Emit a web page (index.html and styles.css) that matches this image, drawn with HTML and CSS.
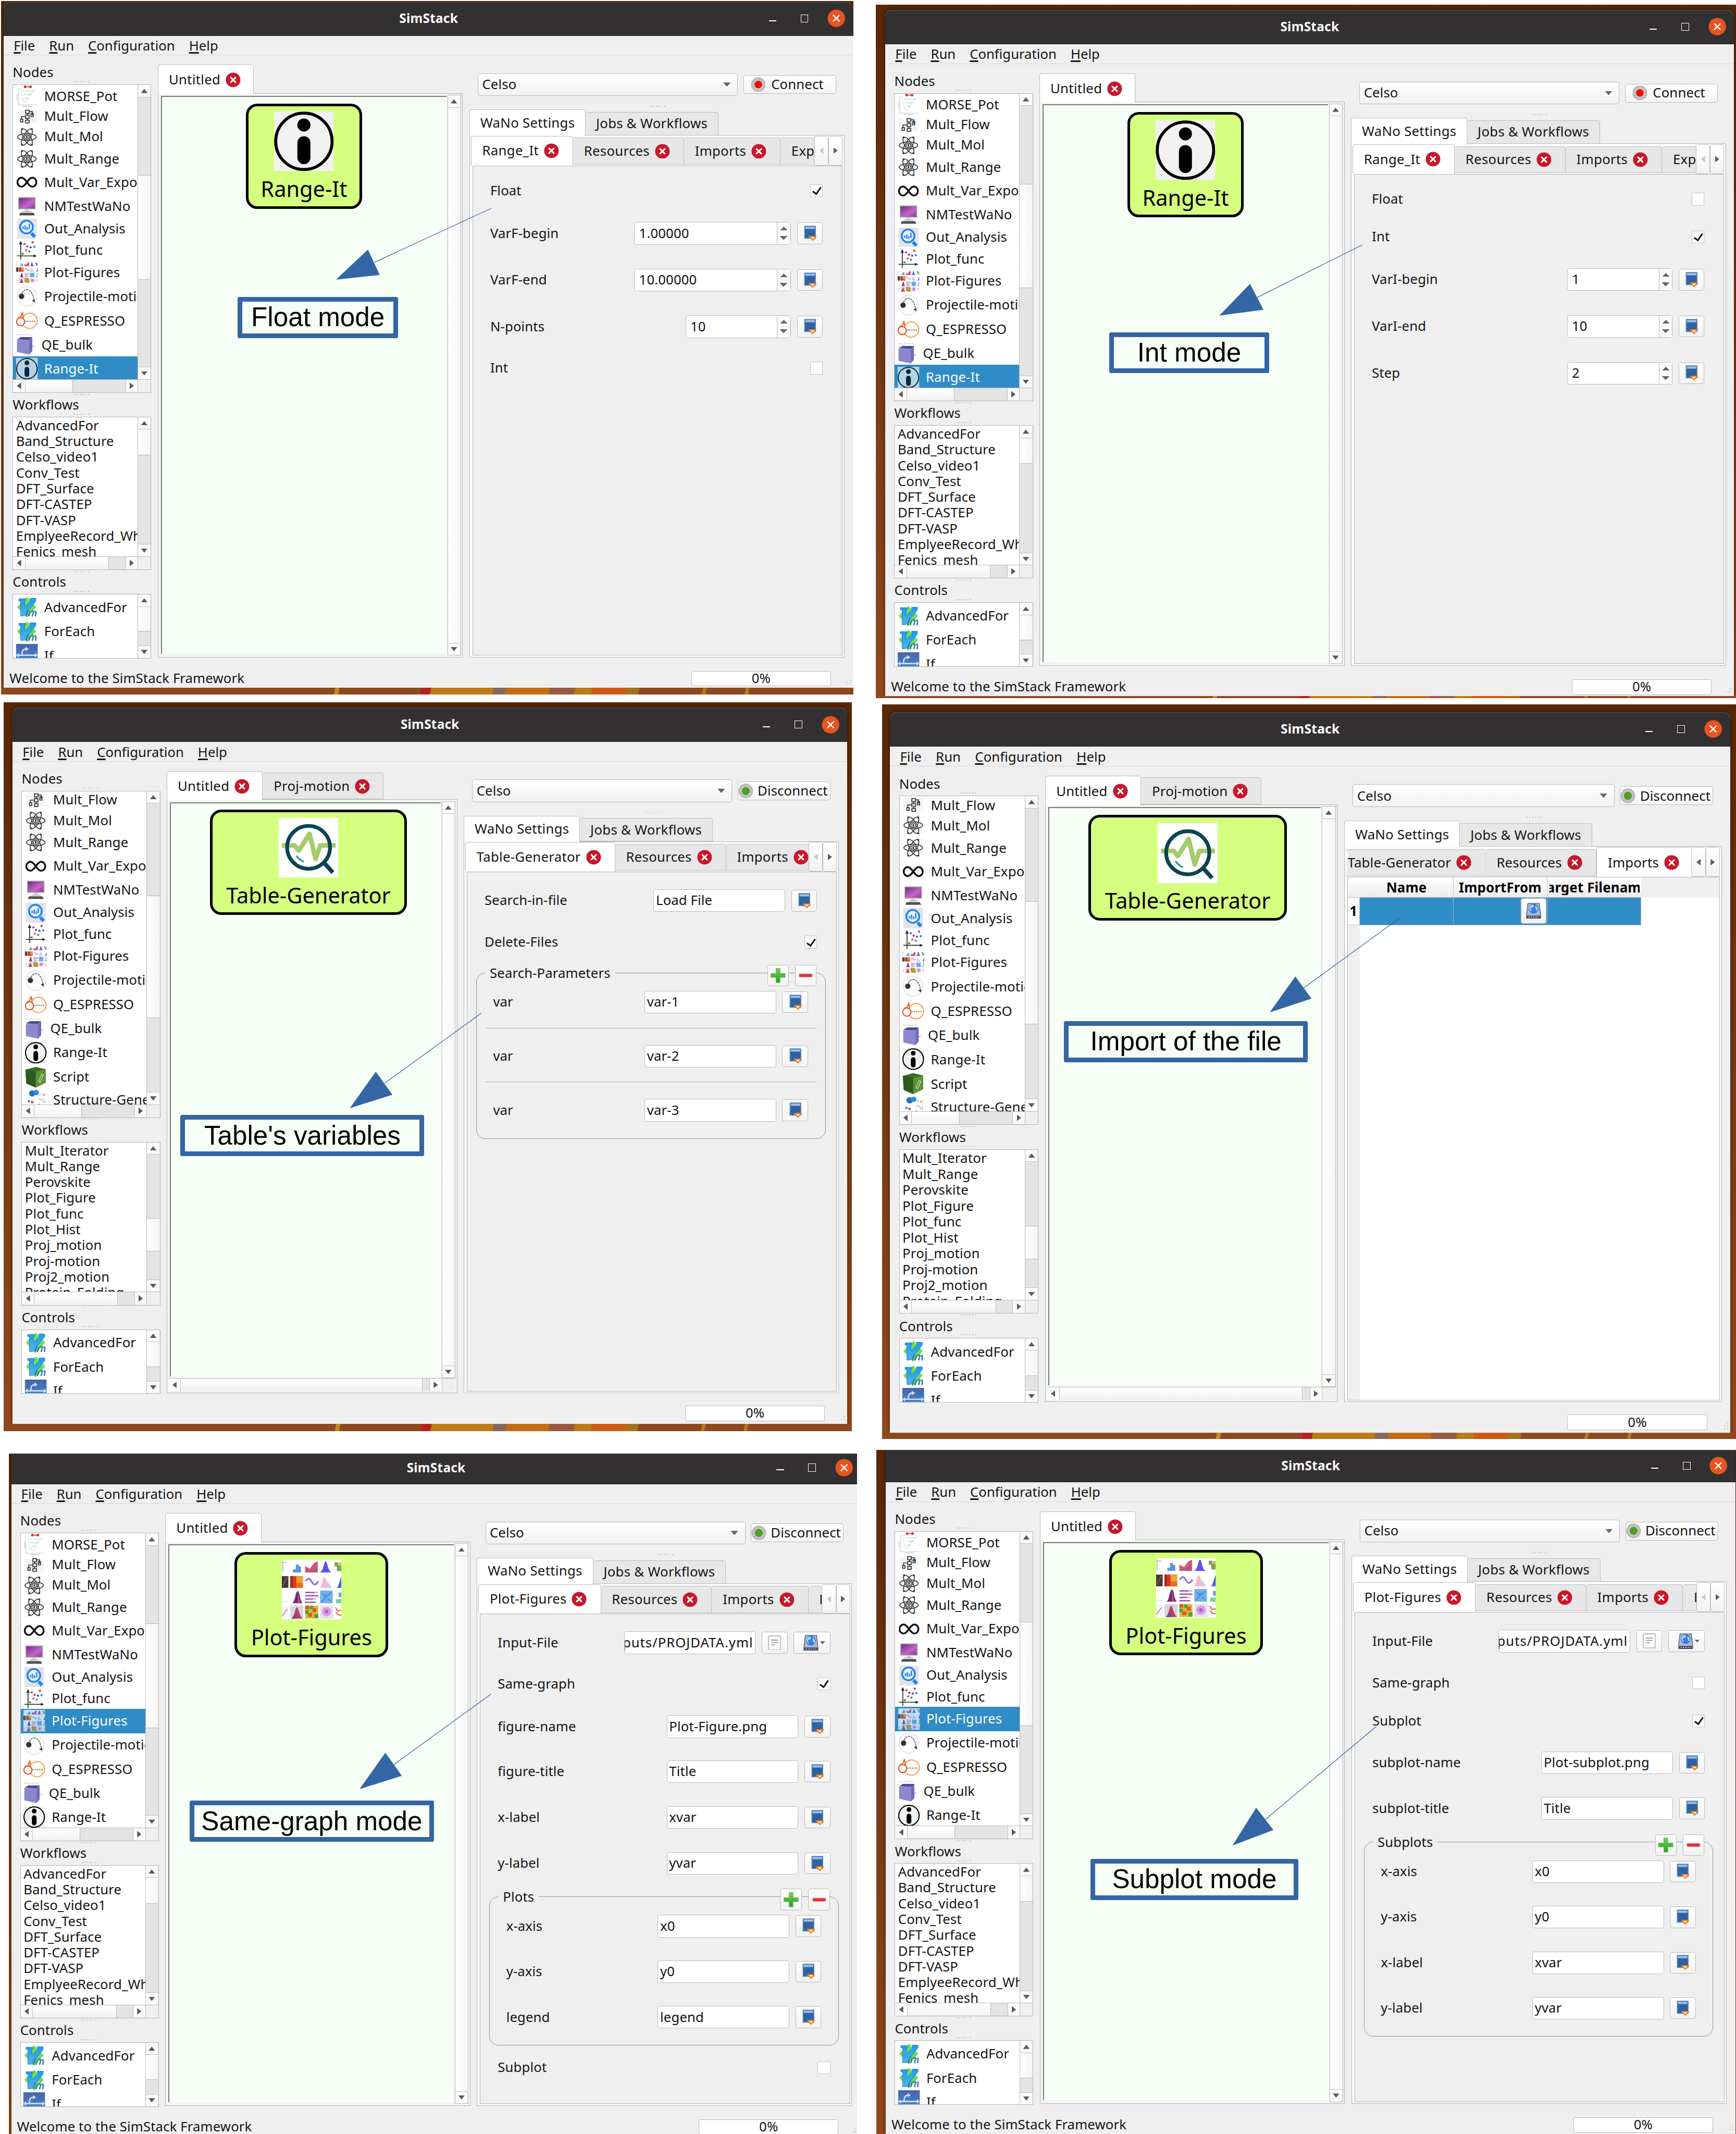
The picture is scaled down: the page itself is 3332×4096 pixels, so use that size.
FILE: index.html
```html
<!DOCTYPE html>
<html lang="en">
<head>
<meta charset="utf-8">
<title>SimStack</title>
<link rel="stylesheet" href="styles.css">
</head>
<body>
<svg class="defs" width="0" height="0" aria-hidden="true">
  <defs>
    <linearGradient id="g-mon" x1="0" y1="0" x2="1" y2="1"><stop offset="0" stop-color="#6d2a86"/><stop offset=".6" stop-color="#c565c8"/><stop offset="1" stop-color="#8c3a96"/></linearGradient>
    <linearGradient id="g-vim" x1="0" y1="0" x2="0" y2="1"><stop offset="0" stop-color="#1f9bea"/><stop offset="1" stop-color="#4fb4f0"/></linearGradient>
    <linearGradient id="g-if" x1="0" y1="0" x2="0" y2="1"><stop offset="0" stop-color="#4a62ac"/><stop offset="1" stop-color="#3c96d0"/></linearGradient>
    <linearGradient id="g-plus" x1="0" y1="0" x2="0" y2="1"><stop offset="0" stop-color="#7ad65c"/><stop offset="1" stop-color="#1f9a1f"/></linearGradient>
    <radialGradient id="g-led"><stop offset=".6" stop-color="#c9c9c9"/><stop offset="1" stop-color="#b2b2b2"/></radialGradient>
  </defs>
  <symbol id="i-close" viewBox="0 0 32 32"><circle cx="16" cy="16" r="15.5" fill="#c9162b"/><path d="M11 11l10 10M21 11L11 21" stroke="#fff" stroke-width="3.4" stroke-linecap="round"/></symbol>
  <symbol id="i-quit" viewBox="0 0 38 38"><circle cx="19" cy="19" r="18.5" fill="#e95420"/><path d="M12 12l14 14M26 12L12 26" stroke="#fff" stroke-width="2.6"/></symbol>
  <symbol id="i-morse" viewBox="0 0 48 48"><path d="M5 4v39h41" fill="none" stroke="#cfcfcf" stroke-width="1.6"/><path d="M2 18v14M14 46h20" stroke="#c9c9c9" stroke-width="1.6"/><path d="M10 6c3 14 5 32 10 31S28 14 44 9" fill="none" stroke="#b9dcf0" stroke-width="2" stroke-dasharray="3 2"/><path d="M14 12h26M17 20h18M19 28h9" stroke="#b8e6b8" stroke-width="1.6"/><path d="M19 3h13" stroke="#d23c3c" stroke-width="2"/><circle cx="20" cy="3" r="3" fill="#cf3b3b"/><circle cx="32" cy="3" r="3" fill="#cf3b3b"/></symbol>
  <symbol id="i-flow" viewBox="0 0 48 48"><path d="M2 10h44v28H2z" fill="#f4f4f4"/><path d="M21 10h8v7h-8zM21 21h8v7h-8zM21 32h8v6h-8zM25 17v4M25 28v4M21 24h-9v6M29 13h7v8M10 30h5v6h-5zM33 17h5v7h-5z" fill="none" stroke="#333" stroke-width="2"/></symbol>
  <symbol id="i-atom" viewBox="0 0 48 48"><path d="M2 2h44v44H2z" fill="#f7f7f7"/><g fill="none" stroke="#2e2e2e" stroke-width="2"><ellipse cx="24" cy="24" rx="22.500" ry="8.500"/><ellipse cx="24" cy="24" rx="22.500" ry="8.500" transform="rotate(60 24 24)"/><ellipse cx="24" cy="24" rx="22.500" ry="8.500" transform="rotate(120 24 24)"/><circle cx="24" cy="24" r="5.500"/></g><path d="M24 21v6" stroke="#111" stroke-width="3"/><g fill="#333"><circle cx="12" cy="5" r="2.400"/><circle cx="36" cy="5" r="2.400"/><circle cx="12" cy="43" r="2.400"/><circle cx="36" cy="43" r="2.400"/></g></symbol>
  <symbol id="i-inf" viewBox="0 0 48 48"><path d="M24 24C19 17 16 14 12 14a9 10 0 0 0 0 20c4 0 7-3 12-10s8-10 12-10a9 10 0 0 1 0 20c-4 0-7-3-12-10z" fill="none" stroke="#111" stroke-width="4"/></symbol>
  <symbol id="i-mon" viewBox="0 0 48 48"><path d="M3 2h42v29H3z" fill="#9d9d9d"/><path d="M5 4h38v25H5z" fill="url(#g-mon)"/><path d="M19 31h10v6H19z" fill="#d0d0d0"/><path d="M13 36h22v2H13z" fill="#aaa"/><path d="M8 40h32l3 6H5z" fill="#333"/><path d="M8 43h32" stroke="#999"/></symbol>
  <symbol id="i-out" viewBox="0 0 48 48"><path d="M0 0h48v48H0z" fill="#e3e3e6"/><path d="M35 35l8 9" stroke="#1b86f2" stroke-width="8"/><circle cx="23" cy="20" r="15.500" fill="#eef0f4" stroke="#1b86f2" stroke-width="4.500"/><path d="M15 19v6M20 16v11M25 20v7M30 12v13" stroke="#1b86f2" stroke-width="3.200"/></symbol>
  <symbol id="i-func" viewBox="0 0 48 48"><path d="M9 46V5M0 37h44" stroke="#222" stroke-width="2" fill="none"/><path d="M9 0l4 9H5zM48 37l-8-3.500v7z" fill="#222"/><g><circle cx="18" cy="8" r="2.600" fill="#8a3fc0"/><circle cx="38" cy="4" r="2.600" fill="#d33"/><circle cx="25" cy="14" r="2.600" fill="#c22"/><circle cx="33" cy="16" r="2.600" fill="#2a4fd0"/><circle cx="42" cy="15" r="2.600" fill="#3a6fe0"/><circle cx="22" cy="23" r="2.600" fill="#d040c0"/><circle cx="30" cy="26" r="2.600" fill="#2a9a2a"/><circle cx="14" cy="32" r="2.600" fill="#2a9a2a"/></g></symbol>
  <symbol id="i-fig" viewBox="0 0 128 128"><path d="M0 0h128v128H0z" fill="#fff"/>
    <path d="M0 6h12M2 2v24" stroke="#aaa" stroke-width="1.500"/><path d="M24 20h6v7h-6zM30 10h6v17h-6zM36 14h5v13h-5z" fill="#5a97d8"/>
    <path d="M50 27V14l10 5 9-12 8-4v24z" fill="#b05a86"/><path d="M50 14l10 5 9-12 8-4v9l-17 12-10-3z" fill="#e0546a"/>
    <path d="M81 27c9-3 9-24 13-24s4 21 13 24z" fill="#5a55e8"/><path d="M113 5h8v9h-8zM118 12h10v12h-10z" fill="#76a84e"/><path d="M122 6h6v6h-6z" fill="#d8c046"/>
    <path d="M0 35h14v25H0z" fill="#3a3a3a"/><path d="M2 56l9-18" stroke="#b44" stroke-width="2"/>
    <path d="M18 35h27v25H18z" fill="#d8361e"/><path d="M31 35h14v15H31z" fill="#f0a32a"/><path d="M31 50h14v10H31z" fill="#e6701e"/><path d="M18 35h5v25h-5z" fill="#b02214"/>
    <path d="M51 46c6-10 9-6 13 1s8 9 14-1" fill="none" stroke="#8c70d8" stroke-width="3.500"/>
    <path d="M81 60c6-2 6-24 10-23s7 20 17 23z" fill="#f6b9c8"/><path d="M88 60c6-4 8-12 11-12s4 10 9 12z" fill="#d9c2f4"/><path d="M117 60c6-3 7-20 11-24v24z" fill="#4f62dc"/>
    <path d="M0 90h14" stroke="#ccc"/><path d="M22 93c7-3 7-26 12-26s4 22 11 26z" fill="#6d2a80"/><path d="M34 67l5 26h-5z" fill="#d0486a"/>
    <path d="M50 70h20M50 77h28M50 84h16M50 91h23" stroke="#a05ab0" stroke-width="3"/><path d="M70 70h8M66 84h7" stroke="#f3a0b4" stroke-width="3"/>
    <path d="M82 66h27v27H82z" fill="#6db4ec"/><path d="M85 90l20-20M87 72l5 5M98 84l7 4M90 80l6-6" stroke="#4c7ad4" stroke-width="2"/><path d="M116 84h12v9h-12z" fill="#7ccf9a"/><path d="M122 70h6v10h-6z" fill="#6aa0e0"/>
    <path d="M0 99h14v27H0z" fill="#f5f5f8"/><path d="M1 120l11-15" stroke="#e07a9a" stroke-width="2"/><path d="M18 98h28v28H18z" fill="#d6d6de"/><path d="M20 126c8-4 8-24 12-24s5 18 13 24z" fill="#c2405a"/><path d="M20 126c6-2 8-12 12-12v12z" fill="#6d4a9a"/>
    <path d="M50 98h28v28H50z" fill="#d8b83c"/><path d="M50 98h8v8h-8zM66 104h8v8h-8zM56 114h9v8h-9z" fill="#d85a2a"/><path d="M60 99h7v7h-7zM50 108h7v8h-7zM70 116h8v9h-8z" fill="#4aa03a"/>
    <path d="M82 98h28v28H82z" fill="#e3e1ea"/><circle cx="96" cy="111" r="10" fill="#dc9ae6"/><circle cx="96" cy="111" r="4" fill="#b860cc"/><path d="M115 102l5 8 8-2M128 118c-5 2-10-1-12-6" fill="none" stroke="#e8694a" stroke-width="2.500"/></symbol>
  <symbol id="i-proj" viewBox="0 0 48 48"><circle cx="24" cy="24" r="22" fill="#fcfcfc" stroke="#dedede" stroke-width="1.500"/><circle cx="12" cy="24" r="6" fill="#333"/><path d="M13 18C17 8 24 8 28 10c7 3 11 14 12 23" fill="none" stroke="#666" stroke-width="2" stroke-dasharray="5 1.500"/><path d="M41 38l-6-5 7-2z" fill="#333"/></symbol>
  <symbol id="i-esp" viewBox="0 0 48 48"><circle cx="30" cy="24" r="17" fill="#fffaf2" stroke="#f3a056" stroke-width="2.400"/><circle cx="10" cy="26" r="9" fill="#fff6f2" stroke="#d64a2a" stroke-width="2.200"/><path d="M4 17l6-1 4-11 2 13" fill="none" stroke="#e8692a" stroke-width="2.600"/><path d="M20 25h23" stroke="#8a8a8a" stroke-width="2.500" stroke-dasharray="3 2"/></symbol>
  <symbol id="i-cube" viewBox="0 0 48 48"><path d="M2 12l9-5h25l-7 7z" fill="#4a48a0"/><path d="M2 13h27v33L2 40z" fill="#8a88cc"/><path d="M29 14l7-7v31l-7 8z" fill="#6f6cb8"/><path d="M2 2h32" stroke="#bbb" stroke-width="2" stroke-dasharray="3 3"/><path d="M36 27h5" stroke="#999" stroke-width="1.500"/></symbol>
  <symbol id="i-info" viewBox="0 0 128 128"><path d="M0 0h128v128H0z" fill="#f1f1f1"/><circle cx="64" cy="64" r="60.500" fill="#f1f1f1" stroke="#000" stroke-width="6.500"/><circle cx="64" cy="29" r="14"/><rect x="50" y="53" width="28" height="60" rx="14"/></symbol>
  <symbol id="i-infosel" viewBox="0 0 128 128"><path d="M0 0h128v128H0z" fill="#b3d4e8"/><circle cx="64" cy="64" r="60.500" fill="#b3d4e8" stroke="#12303f" stroke-width="6.500"/><circle cx="64" cy="29" r="14" fill="#0c2433"/><rect x="50" y="53" width="28" height="60" rx="14" fill="#0c2433"/></symbol>
  <symbol id="i-script" viewBox="0 0 48 48"><path d="M1 7l23-6 22 5v30L24 47 3 38z" fill="#3f6b25"/><path d="M1 7l23 5v35L3 38z" fill="#2f5a1c"/><path d="M24 12l22-6v30L24 47z" fill="#5c9238"/><path d="M30 33l7-16 4 2-7 16z" fill="none" stroke="#b9dc9a" stroke-width="1.800"/></symbol>
  <symbol id="i-struct" viewBox="0 0 48 48"><circle cx="16" cy="9" r="7" fill="#2273c4"/><circle cx="25" cy="7" r="6" fill="#2f8de0"/><circle cx="33" cy="11" r="3.500" fill="#cfe2f4"/><circle cx="9" cy="26" r="3" fill="#4aa6e0"/><circle cx="16" cy="28" r="3" fill="#d05a4a"/><circle cx="42" cy="12" r="2" fill="#c66"/><path d="M30 22c8-2 10 2 11 8M6 40l8-6 8 6M44 22v8" fill="none" stroke="#b9b9b9" stroke-width="2"/><circle cx="31" cy="34" r="2.500" fill="#e08a3a"/></symbol>
  <symbol id="i-vim" viewBox="0 0 48 48"><path d="M24 1l21 22-21 24L2 23z" fill="#6fdc5c"/><path d="M6 5h15v4l-2 1v13L33 9l-2-1V4h13v6L18 43h-8V10H6z" fill="url(#g-vim)" stroke="#1a78bc" stroke-width="1"/><path d="M27 29l-5 15M31 33l-3 11M33 33c6-3 6 0 3 11M40 34c5-2 5 0 3 10" fill="none" stroke="#2c7aa8" stroke-width="3"/></symbol>
  <symbol id="i-if" viewBox="0 0 48 48"><path d="M0 0h48v48H0z" fill="url(#g-if)"/><path d="M4 25h40M13 24c0-9 3-13 9-13" fill="none" stroke="#d3deee" stroke-width="3"/><path d="M21 6l7 5-7 5zM42 20l6 5-6 5zM6 20l-6 5 6 5z" fill="#d3deee"/></symbol>
  <symbol id="i-save" viewBox="0 0 28 34"><path d="M1 1h24v27H1z" fill="#3465a4"/><path d="M2.500 2.500h21v5h-21z" fill="#9dbfe6"/><path d="M4 8h18v17H4z" fill="#2f62a5"/><path d="M1 1h24v27H1z" fill="none" stroke="#5b8ac6" stroke-width="1.500"/><path d="M11 24h15l-7.500 8z" fill="#fbe3b4" stroke="#f07c12" stroke-width="2.400" stroke-linejoin="round"/></symbol>
  <symbol id="i-doc" viewBox="0 0 28 32"><rect x="1" y="1" width="26" height="30" rx="3" fill="#fafafa" stroke="#b0b0b0" stroke-width="1.800"/><path d="M7 10h14M7 15h14M7 20h7" stroke="#999" stroke-width="2"/></symbol>
  <symbol id="i-disk" viewBox="0 0 32 34"><path d="M4 1h24l3 25v7H1v-7z" fill="#aeb9cc" stroke="#4a5a78" stroke-width="1.500"/><circle cx="16" cy="12" r="10.500" fill="#3a7ce0"/><path d="M10 5c4-3 8 0 6 3s-5 1-6 4 3 3 2 6c-5-2-8-8-2-13zM20 6c4 2 6 7 4 11-3-1-5-5-4-11z" fill="#a9d2fb"/><path d="M2 27h28v6H2z" fill="#38435c"/><path d="M5 30h22" stroke="#c4cede" stroke-width="2" stroke-dasharray="3 2"/></symbol>
  <symbol id="i-plus" viewBox="0 0 34 34"><path d="M13 2h8v11h11v8H21v11h-8V21H2v-8h11z" fill="url(#g-plus)" stroke="#55b845" stroke-width="1.500" stroke-linejoin="round"/></symbol>
  <symbol id="i-minus" viewBox="0 0 34 34"><rect x="3" y="13.500" width="28" height="7" rx="2" fill="#d9343e" stroke="#e88" stroke-width="1"/></symbol>
  <symbol id="i-red" viewBox="0 0 34 34"><circle cx="17" cy="17" r="16.500" fill="url(#g-led)"/><circle cx="17" cy="17" r="8.500" fill="#f20d00"/></symbol>
  <symbol id="i-green" viewBox="0 0 34 34"><circle cx="17" cy="17" r="16.500" fill="url(#g-led)"/><circle cx="17" cy="17" r="8.500" fill="#539e22" stroke="#468a1c"/></symbol>
  <symbol id="i-table" viewBox="0 0 128 128"><path d="M0 0h128v128H0z" fill="#fff"/><path d="M7 59h27l9 11 23-36 13 54 10-29h33" fill="none" stroke="#a5cb6c" stroke-width="10" stroke-linejoin="round"/><circle cx="64" cy="63" r="46" fill="none" stroke="#0b4352" stroke-width="8"/><path d="M98 97l18 20" stroke="#0b4352" stroke-width="9"/><path d="M38 81c4 6 9 10 16 13" fill="none" stroke="#2ba3a0" stroke-width="4"/></symbol>
</svg>

<main class="board">

<!-- 1: float mode -->
<section class="shot s1">
  <div class="win">
    <header class="title"><h2>SimStack</h2><div class="ctl"><i class="min"></i><i class="max"></i><svg><use href="#i-quit"/></svg></div></header>
    <nav class="menu"><span><u>F</u>ile</span><span><u>R</u>un</span><span><u>C</u>onfiguration</span><span><u>H</u>elp</span></nav>
    <div class="main">
      <aside class="side">
        <div class="cap first">Nodes</div>
        <div class="box nodes">
          <ul class="list">
            <li class="r1"><svg><use href="#i-morse"/></svg>MORSE_Pot</li>
            <li class="r2"><svg><use href="#i-flow"/></svg>Mult_Flow</li>
            <li class="r3"><svg><use href="#i-atom"/></svg>Mult_Mol</li>
            <li class="r4"><svg><use href="#i-atom"/></svg>Mult_Range</li>
            <li class="r5"><svg><use href="#i-inf"/></svg>Mult_Var_Expo</li>
            <li class="r6"><svg><use href="#i-mon"/></svg>NMTestWaNo</li>
            <li class="r7"><svg><use href="#i-out"/></svg>Out_Analysis</li>
            <li class="r8"><svg><use href="#i-func"/></svg>Plot_func</li>
            <li class="r9"><svg><use href="#i-fig"/></svg>Plot-Figures</li>
            <li class="r10"><svg><use href="#i-proj"/></svg>Projectile-motion</li>
            <li class="r11"><svg><use href="#i-esp"/></svg>Q_ESPRESSO</li>
            <li class="r12"><svg><use href="#i-cube"/></svg>QE_bulk</li>
            <li class="r13 sel"><svg><use href="#i-infosel"/></svg>Range-It</li>
          </ul>
          <div class="vbar"><b class="up"></b><div class="track"><span class="thumb tn"></span></div><b class="down"></b></div>
          <div class="hbar"><b class="lt"></b><div class="track"><span class="thumb hn"></span></div><b class="rt"></b></div><div class="corner"></div>
        </div>
        <div class="cap">Workflows</div>
        <div class="box flows">
          <ul class="list plain"><li>AdvancedFor</li><li>Band_Structure</li><li>Celso_video1</li><li>Conv_Test</li><li>DFT_Surface</li><li>DFT-CASTEP</li><li>DFT-VASP</li><li>EmplyeeRecord_While</li><li>Fenics_mesh</li></ul>
          <div class="vbar"><b class="up"></b><div class="track"><span class="thumb tf"></span></div><b class="down"></b></div>
          <div class="hbar"><b class="lt"></b><div class="track"><span class="thumb hf"></span></div><b class="rt"></b></div><div class="corner"></div>
        </div>
        <div class="cap">Controls</div>
        <div class="box ctrls">
          <ul class="list"><li><svg><use href="#i-vim"/></svg>AdvancedFor</li><li><svg><use href="#i-vim"/></svg>ForEach</li><li><svg><use href="#i-if"/></svg>If</li></ul>
          <div class="vbar"><b class="up"></b><div class="track"><span class="thumb tc"></span></div><b class="down"></b></div>
        </div>
      </aside>
      <section class="mid">
        <div class="tabs"><span class="tab on">Untitled<svg><use href="#i-close"/></svg></span></div>
        <div class="pane"><div class="canvas"><div class="node n1"><svg><use href="#i-info"/></svg>Range-It</div></div><div class="vbar"><b class="up"></b><div class="track"><span class="thumb full"></span></div><b class="down"></b></div></div>
      </section>
      <section class="right">
        <div class="conn"><div class="combo">Celso</div><button class="link"><svg><use href="#i-red"/></svg>Connect</button></div>
        <div class="tabs outer"><span class="tab on">WaNo Settings</span><span class="tab">Jobs &amp; Workflows</span></div>
        <div class="opane">
          <div class="itabs"><div class="clip"><span class="tab on">Range_It<svg><use href="#i-close"/></svg></span><span class="tab">Resources<svg><use href="#i-close"/></svg></span><span class="tab">Imports<svg><use href="#i-close"/></svg></span><span class="tab">Exports</span></div><b class="nav lt off"></b><b class="nav rt"></b></div>
          <div class="form f1">
            <div class="row"><label>Float</label><i class="chk yes"></i></div>
            <div class="row"><label>VarF-begin</label><span class="spin wide">1.00000</span><span class="btn"><svg><use href="#i-save"/></svg></span></div>
            <div class="row"><label>VarF-end</label><span class="spin wide">10.00000</span><span class="btn"><svg><use href="#i-save"/></svg></span></div>
            <div class="row"><label>N-points</label><span class="spin">10</span><span class="btn"><svg><use href="#i-save"/></svg></span></div>
            <div class="row"><label>Int</label><i class="chk"></i></div>
          </div>
        </div>
      </section>
    </div>
    <footer class="status"><span>Welcome to the SimStack Framework</span><div class="prog">0%</div></footer>
  </div>
  <div class="wall w1"></div>
</section>

<!-- 2: int mode -->
<section class="shot s2">
  <div class="win">
    <header class="title"><h2>SimStack</h2><div class="ctl"><i class="min"></i><i class="max"></i><svg><use href="#i-quit"/></svg></div></header>
    <nav class="menu"><span><u>F</u>ile</span><span><u>R</u>un</span><span><u>C</u>onfiguration</span><span><u>H</u>elp</span></nav>
    <div class="main">
      <aside class="side">
        <div class="cap first">Nodes</div>
        <div class="box nodes">
          <ul class="list">
            <li class="r1"><svg><use href="#i-morse"/></svg>MORSE_Pot</li>
            <li class="r2"><svg><use href="#i-flow"/></svg>Mult_Flow</li>
            <li class="r3"><svg><use href="#i-atom"/></svg>Mult_Mol</li>
            <li class="r4"><svg><use href="#i-atom"/></svg>Mult_Range</li>
            <li class="r5"><svg><use href="#i-inf"/></svg>Mult_Var_Expo</li>
            <li class="r6"><svg><use href="#i-mon"/></svg>NMTestWaNo</li>
            <li class="r7"><svg><use href="#i-out"/></svg>Out_Analysis</li>
            <li class="r8"><svg><use href="#i-func"/></svg>Plot_func</li>
            <li class="r9"><svg><use href="#i-fig"/></svg>Plot-Figures</li>
            <li class="r10"><svg><use href="#i-proj"/></svg>Projectile-motion</li>
            <li class="r11"><svg><use href="#i-esp"/></svg>Q_ESPRESSO</li>
            <li class="r12"><svg><use href="#i-cube"/></svg>QE_bulk</li>
            <li class="r13 sel"><svg><use href="#i-infosel"/></svg>Range-It</li>
          </ul>
          <div class="vbar"><b class="up"></b><div class="track"><span class="thumb tn"></span></div><b class="down"></b></div>
          <div class="hbar"><b class="lt"></b><div class="track"><span class="thumb hn"></span></div><b class="rt"></b></div><div class="corner"></div>
        </div>
        <div class="cap">Workflows</div>
        <div class="box flows">
          <ul class="list plain"><li>AdvancedFor</li><li>Band_Structure</li><li>Celso_video1</li><li>Conv_Test</li><li>DFT_Surface</li><li>DFT-CASTEP</li><li>DFT-VASP</li><li>EmplyeeRecord_While</li><li>Fenics_mesh</li></ul>
          <div class="vbar"><b class="up"></b><div class="track"><span class="thumb tf"></span></div><b class="down"></b></div>
          <div class="hbar"><b class="lt"></b><div class="track"><span class="thumb hf"></span></div><b class="rt"></b></div><div class="corner"></div>
        </div>
        <div class="cap">Controls</div>
        <div class="box ctrls">
          <ul class="list"><li><svg><use href="#i-vim"/></svg>AdvancedFor</li><li><svg><use href="#i-vim"/></svg>ForEach</li><li><svg><use href="#i-if"/></svg>If</li></ul>
          <div class="vbar"><b class="up"></b><div class="track"><span class="thumb tc"></span></div><b class="down"></b></div>
        </div>
      </aside>
      <section class="mid">
        <div class="tabs"><span class="tab on">Untitled<svg><use href="#i-close"/></svg></span></div>
        <div class="pane"><div class="canvas"><div class="node n1"><svg><use href="#i-info"/></svg>Range-It</div></div><div class="vbar"><b class="up"></b><div class="track"><span class="thumb full"></span></div><b class="down"></b></div></div>
      </section>
      <section class="right">
        <div class="conn"><div class="combo">Celso</div><button class="link"><svg><use href="#i-red"/></svg>Connect</button></div>
        <div class="tabs outer"><span class="tab on">WaNo Settings</span><span class="tab">Jobs &amp; Workflows</span></div>
        <div class="opane">
          <div class="itabs"><div class="clip"><span class="tab on">Range_It<svg><use href="#i-close"/></svg></span><span class="tab">Resources<svg><use href="#i-close"/></svg></span><span class="tab">Imports<svg><use href="#i-close"/></svg></span><span class="tab">Exports</span></div><b class="nav lt off"></b><b class="nav rt"></b></div>
          <div class="form f2">
            <div class="row"><label>Float</label><i class="chk"></i></div>
            <div class="row"><label>Int</label><i class="chk yes"></i></div>
            <div class="row"><label>VarI-begin</label><span class="spin">1</span><span class="btn"><svg><use href="#i-save"/></svg></span></div>
            <div class="row"><label>VarI-end</label><span class="spin">10</span><span class="btn"><svg><use href="#i-save"/></svg></span></div>
            <div class="row"><label>Step</label><span class="spin">2</span><span class="btn"><svg><use href="#i-save"/></svg></span></div>
          </div>
        </div>
      </section>
    </div>
    <footer class="status"><span>Welcome to the SimStack Framework</span><div class="prog">0%</div></footer>
  </div>
  <div class="wall w2"></div>
</section>

<!-- 3: table variables -->
<section class="shot s3">
  <div class="win tall">
    <header class="title"><h2>SimStack</h2><div class="ctl"><i class="min"></i><i class="max"></i><svg><use href="#i-quit"/></svg></div></header>
    <nav class="menu"><span><u>F</u>ile</span><span><u>R</u>un</span><span><u>C</u>onfiguration</span><span><u>H</u>elp</span></nav>
    <div class="main">
      <aside class="side">
        <div class="cap first">Nodes</div>
        <div class="box nodes">
          <ul class="list">
            <li class="r2"><svg><use href="#i-flow"/></svg>Mult_Flow</li>
            <li class="r3"><svg><use href="#i-atom"/></svg>Mult_Mol</li>
            <li class="r4"><svg><use href="#i-atom"/></svg>Mult_Range</li>
            <li class="r5"><svg><use href="#i-inf"/></svg>Mult_Var_Expo</li>
            <li class="r6"><svg><use href="#i-mon"/></svg>NMTestWaNo</li>
            <li class="r7"><svg><use href="#i-out"/></svg>Out_Analysis</li>
            <li class="r8"><svg><use href="#i-func"/></svg>Plot_func</li>
            <li class="r9"><svg><use href="#i-fig"/></svg>Plot-Figures</li>
            <li class="r10"><svg><use href="#i-proj"/></svg>Projectile-motion</li>
            <li class="r11"><svg><use href="#i-esp"/></svg>Q_ESPRESSO</li>
            <li class="r12"><svg><use href="#i-cube"/></svg>QE_bulk</li>
            <li class="r13"><svg><use href="#i-info"/></svg>Range-It</li>
            <li class="r14"><svg><use href="#i-script"/></svg>Script</li>
            <li class="r15"><svg><use href="#i-struct"/></svg>Structure-Generator</li>
          </ul>
          <div class="vbar"><b class="up"></b><div class="track"><span class="thumb tn"></span></div><b class="down"></b></div>
          <div class="hbar"><b class="lt"></b><div class="track"><span class="thumb hn"></span></div><b class="rt"></b></div><div class="corner"></div>
        </div>
        <div class="cap">Workflows</div>
        <div class="box flows">
          <ul class="list plain"><li>Mult_Iterator</li><li>Mult_Range</li><li>Perovskite</li><li>Plot_Figure</li><li>Plot_func</li><li>Plot_Hist</li><li>Proj_motion</li><li>Proj-motion</li><li>Proj2_motion</li><li>Protein_Folding</li></ul>
          <div class="vbar"><b class="up"></b><div class="track"><span class="thumb tf"></span></div><b class="down"></b></div>
          <div class="hbar"><b class="lt"></b><div class="track"><span class="thumb hf"></span></div><b class="rt"></b></div><div class="corner"></div>
        </div>
        <div class="cap">Controls</div>
        <div class="box ctrls">
          <ul class="list"><li><svg><use href="#i-vim"/></svg>AdvancedFor</li><li><svg><use href="#i-vim"/></svg>ForEach</li><li><svg><use href="#i-if"/></svg>If</li></ul>
          <div class="vbar"><b class="up"></b><div class="track"><span class="thumb tc"></span></div><b class="down"></b></div>
        </div>
      </aside>
      <section class="mid">
        <div class="tabs"><span class="tab on">Untitled<svg><use href="#i-close"/></svg></span><span class="tab">Proj-motion<svg><use href="#i-close"/></svg></span></div>
        <div class="pane"><div class="canvas"><div class="node n3"><svg><use href="#i-table"/></svg>Table-Generator</div></div><div class="vbar"><b class="up"></b><div class="track"><span class="thumb full"></span></div><b class="down"></b></div><div class="hbar"><b class="lt"></b><div class="track"><span class="thumb hc"></span></div><b class="rt"></b></div><div class="corner"></div></div>
      </section>
      <section class="right">
        <div class="conn"><div class="combo">Celso</div><button class="link off"><svg><use href="#i-green"/></svg>Disconnect</button></div>
        <div class="tabs outer"><span class="tab on">WaNo Settings</span><span class="tab">Jobs &amp; Workflows</span></div>
        <div class="opane">
          <div class="itabs"><div class="clip"><span class="tab on">Table-Generator<svg><use href="#i-close"/></svg></span><span class="tab">Resources<svg><use href="#i-close"/></svg></span><span class="tab">Imports<svg><use href="#i-close"/></svg></span></div><b class="nav lt off"></b><b class="nav rt"></b></div>
          <div class="form f3">
            <div class="row"><label>Search-in-file</label><span class="txt">Load File</span><span class="btn"><svg><use href="#i-save"/></svg></span></div>
            <div class="row"><label>Delete-Files</label><i class="chk yes"></i></div>
            <fieldset class="g3"><legend>Search-Parameters</legend>
              <div class="pm"><span><svg><use href="#i-plus"/></svg></span><span><svg><use href="#i-minus"/></svg></span></div>
              <div class="row"><label>var</label><span class="txt">var-1</span><span class="btn"><svg><use href="#i-save"/></svg></span></div>
              <div class="row"><label>var</label><span class="txt">var-2</span><span class="btn"><svg><use href="#i-save"/></svg></span></div>
              <div class="row"><label>var</label><span class="txt">var-3</span><span class="btn"><svg><use href="#i-save"/></svg></span></div>
            </fieldset>
          </div>
        </div>
      </section>
    </div>
    <footer class="status"><span></span><div class="prog">0%</div></footer>
  </div>
  <div class="wall w3"></div>
</section>

<!-- 4: file import -->
<section class="shot s4">
  <div class="win tall">
    <header class="title"><h2>SimStack</h2><div class="ctl"><i class="min"></i><i class="max"></i><svg><use href="#i-quit"/></svg></div></header>
    <nav class="menu"><span><u>F</u>ile</span><span><u>R</u>un</span><span><u>C</u>onfiguration</span><span><u>H</u>elp</span></nav>
    <div class="main">
      <aside class="side">
        <div class="cap first">Nodes</div>
        <div class="box nodes">
          <ul class="list">
            <li class="r2"><svg><use href="#i-flow"/></svg>Mult_Flow</li>
            <li class="r3"><svg><use href="#i-atom"/></svg>Mult_Mol</li>
            <li class="r4"><svg><use href="#i-atom"/></svg>Mult_Range</li>
            <li class="r5"><svg><use href="#i-inf"/></svg>Mult_Var_Expo</li>
            <li class="r6"><svg><use href="#i-mon"/></svg>NMTestWaNo</li>
            <li class="r7"><svg><use href="#i-out"/></svg>Out_Analysis</li>
            <li class="r8"><svg><use href="#i-func"/></svg>Plot_func</li>
            <li class="r9"><svg><use href="#i-fig"/></svg>Plot-Figures</li>
            <li class="r10"><svg><use href="#i-proj"/></svg>Projectile-motion</li>
            <li class="r11"><svg><use href="#i-esp"/></svg>Q_ESPRESSO</li>
            <li class="r12"><svg><use href="#i-cube"/></svg>QE_bulk</li>
            <li class="r13"><svg><use href="#i-info"/></svg>Range-It</li>
            <li class="r14"><svg><use href="#i-script"/></svg>Script</li>
            <li class="r15"><svg><use href="#i-struct"/></svg>Structure-Generator</li>
          </ul>
          <div class="vbar"><b class="up"></b><div class="track"><span class="thumb tn"></span></div><b class="down"></b></div>
          <div class="hbar"><b class="lt"></b><div class="track"><span class="thumb hn"></span></div><b class="rt"></b></div><div class="corner"></div>
        </div>
        <div class="cap">Workflows</div>
        <div class="box flows">
          <ul class="list plain"><li>Mult_Iterator</li><li>Mult_Range</li><li>Perovskite</li><li>Plot_Figure</li><li>Plot_func</li><li>Plot_Hist</li><li>Proj_motion</li><li>Proj-motion</li><li>Proj2_motion</li><li>Protein_Folding</li></ul>
          <div class="vbar"><b class="up"></b><div class="track"><span class="thumb tf"></span></div><b class="down"></b></div>
          <div class="hbar"><b class="lt"></b><div class="track"><span class="thumb hf"></span></div><b class="rt"></b></div><div class="corner"></div>
        </div>
        <div class="cap">Controls</div>
        <div class="box ctrls">
          <ul class="list"><li><svg><use href="#i-vim"/></svg>AdvancedFor</li><li><svg><use href="#i-vim"/></svg>ForEach</li><li><svg><use href="#i-if"/></svg>If</li></ul>
          <div class="vbar"><b class="up"></b><div class="track"><span class="thumb tc"></span></div><b class="down"></b></div>
        </div>
      </aside>
      <section class="mid">
        <div class="tabs"><span class="tab on">Untitled<svg><use href="#i-close"/></svg></span><span class="tab">Proj-motion<svg><use href="#i-close"/></svg></span></div>
        <div class="pane"><div class="canvas"><div class="node n3"><svg><use href="#i-table"/></svg>Table-Generator</div></div><div class="vbar"><b class="up"></b><div class="track"><span class="thumb full"></span></div><b class="down"></b></div><div class="hbar"><b class="lt"></b><div class="track"><span class="thumb hc"></span></div><b class="rt"></b></div><div class="corner"></div></div>
      </section>
      <section class="right">
        <div class="conn"><div class="combo">Celso</div><button class="link off"><svg><use href="#i-green"/></svg>Disconnect</button></div>
        <div class="tabs outer"><span class="tab on">WaNo Settings</span><span class="tab">Jobs &amp; Workflows</span></div>
        <div class="opane">
          <div class="itabs"><div class="clip"><span class="tab torn">Table-Generator<svg><use href="#i-close"/></svg></span><span class="tab">Resources<svg><use href="#i-close"/></svg></span><span class="tab on">Imports<svg><use href="#i-close"/></svg></span></div><b class="nav lt"></b><b class="nav rt"></b></div>
          <div class="form sheet">
            <div class="hd"></div><div class="hd">Name</div><div class="hd">ImportFrom</div><div class="hd cut"><span>Target Filename</span></div><div class="rest"></div>
            <div class="no">1</div><div class="cell"></div><div class="cell"><span class="btn"><svg><use href="#i-disk"/></svg></span></div><div class="cell"></div><div></div>
            <div class="gut"></div>
          </div>
        </div>
      </section>
    </div>
    <footer class="status"><span></span><div class="prog">0%</div></footer>
  </div>
  <div class="wall w4"></div>
</section>

<!-- 5: same-graph mode -->
<section class="shot s5">
  <div class="win">
    <header class="title"><h2>SimStack</h2><div class="ctl"><i class="min"></i><i class="max"></i><svg><use href="#i-quit"/></svg></div></header>
    <nav class="menu"><span><u>F</u>ile</span><span><u>R</u>un</span><span><u>C</u>onfiguration</span><span><u>H</u>elp</span></nav>
    <div class="main">
      <aside class="side">
        <div class="cap first">Nodes</div>
        <div class="box nodes">
          <ul class="list">
            <li class="r1"><svg><use href="#i-morse"/></svg>MORSE_Pot</li>
            <li class="r2"><svg><use href="#i-flow"/></svg>Mult_Flow</li>
            <li class="r3"><svg><use href="#i-atom"/></svg>Mult_Mol</li>
            <li class="r4"><svg><use href="#i-atom"/></svg>Mult_Range</li>
            <li class="r5"><svg><use href="#i-inf"/></svg>Mult_Var_Expo</li>
            <li class="r6"><svg><use href="#i-mon"/></svg>NMTestWaNo</li>
            <li class="r7"><svg><use href="#i-out"/></svg>Out_Analysis</li>
            <li class="r8"><svg><use href="#i-func"/></svg>Plot_func</li>
            <li class="r9 sel"><svg><use href="#i-fig"/></svg>Plot-Figures</li>
            <li class="r10"><svg><use href="#i-proj"/></svg>Projectile-motion</li>
            <li class="r11"><svg><use href="#i-esp"/></svg>Q_ESPRESSO</li>
            <li class="r12"><svg><use href="#i-cube"/></svg>QE_bulk</li>
            <li class="r13"><svg><use href="#i-info"/></svg>Range-It</li>
          </ul>
          <div class="vbar"><b class="up"></b><div class="track"><span class="thumb tn"></span></div><b class="down"></b></div>
          <div class="hbar"><b class="lt"></b><div class="track"><span class="thumb hn"></span></div><b class="rt"></b></div><div class="corner"></div>
        </div>
        <div class="cap">Workflows</div>
        <div class="box flows">
          <ul class="list plain"><li>AdvancedFor</li><li>Band_Structure</li><li>Celso_video1</li><li>Conv_Test</li><li>DFT_Surface</li><li>DFT-CASTEP</li><li>DFT-VASP</li><li>EmplyeeRecord_While</li><li>Fenics_mesh</li></ul>
          <div class="vbar"><b class="up"></b><div class="track"><span class="thumb tf"></span></div><b class="down"></b></div>
          <div class="hbar"><b class="lt"></b><div class="track"><span class="thumb hf"></span></div><b class="rt"></b></div><div class="corner"></div>
        </div>
        <div class="cap">Controls</div>
        <div class="box ctrls">
          <ul class="list"><li><svg><use href="#i-vim"/></svg>AdvancedFor</li><li><svg><use href="#i-vim"/></svg>ForEach</li><li><svg><use href="#i-if"/></svg>If</li></ul>
          <div class="vbar"><b class="up"></b><div class="track"><span class="thumb tc"></span></div><b class="down"></b></div>
        </div>
      </aside>
      <section class="mid">
        <div class="tabs"><span class="tab on">Untitled<svg><use href="#i-close"/></svg></span></div>
        <div class="pane"><div class="canvas"><div class="node n5"><svg><use href="#i-fig"/></svg>Plot-Figures</div></div><div class="vbar"><b class="up"></b><div class="track"><span class="thumb full"></span></div><b class="down"></b></div></div>
      </section>
      <section class="right">
        <div class="conn"><div class="combo">Celso</div><button class="link off"><svg><use href="#i-green"/></svg>Disconnect</button></div>
        <div class="tabs outer"><span class="tab on">WaNo Settings</span><span class="tab">Jobs &amp; Workflows</span></div>
        <div class="opane">
          <div class="itabs"><div class="clip"><span class="tab on">Plot-Figures<svg><use href="#i-close"/></svg></span><span class="tab">Resources<svg><use href="#i-close"/></svg></span><span class="tab">Imports<svg><use href="#i-close"/></svg></span><span class="tab">Exports</span></div><b class="nav lt off"></b><b class="nav rt"></b></div>
          <div class="form f5">
            <div class="row"><label>Input-File</label><span class="txt path">puts/PROJDATA.yml</span><span class="btn"><svg class="doc"><use href="#i-doc"/></svg></span><span class="btn drop"><svg><use href="#i-disk"/></svg></span></div>
            <div class="row"><label>Same-graph</label><i class="chk yes"></i></div>
            <div class="row"><label>figure-name</label><span class="txt">Plot-Figure.png</span><span class="btn"><svg><use href="#i-save"/></svg></span></div>
            <div class="row"><label>figure-title</label><span class="txt">Title</span><span class="btn"><svg><use href="#i-save"/></svg></span></div>
            <div class="row"><label>x-label</label><span class="txt">xvar</span><span class="btn"><svg><use href="#i-save"/></svg></span></div>
            <div class="row"><label>y-label</label><span class="txt">yvar</span><span class="btn"><svg><use href="#i-save"/></svg></span></div>
            <fieldset class="g5"><legend>Plots</legend>
              <div class="pm"><span><svg><use href="#i-plus"/></svg></span><span><svg><use href="#i-minus"/></svg></span></div>
              <div class="row"><label>x-axis</label><span class="txt">x0</span><span class="btn"><svg><use href="#i-save"/></svg></span></div>
              <div class="row"><label>y-axis</label><span class="txt">y0</span><span class="btn"><svg><use href="#i-save"/></svg></span></div>
              <div class="row"><label>legend</label><span class="txt">legend</span><span class="btn"><svg><use href="#i-save"/></svg></span></div>
            </fieldset>
            <div class="row"><label>Subplot</label><i class="chk"></i></div>
          </div>
        </div>
      </section>
    </div>
    <footer class="status"><span>Welcome to the SimStack Framework</span><div class="prog">0%</div></footer>
  </div>
</section>

<!-- 6: subplot mode -->
<section class="shot s6">
  <div class="win">
    <header class="title"><h2>SimStack</h2><div class="ctl"><i class="min"></i><i class="max"></i><svg><use href="#i-quit"/></svg></div></header>
    <nav class="menu"><span><u>F</u>ile</span><span><u>R</u>un</span><span><u>C</u>onfiguration</span><span><u>H</u>elp</span></nav>
    <div class="main">
      <aside class="side">
        <div class="cap first">Nodes</div>
        <div class="box nodes">
          <ul class="list">
            <li class="r1"><svg><use href="#i-morse"/></svg>MORSE_Pot</li>
            <li class="r2"><svg><use href="#i-flow"/></svg>Mult_Flow</li>
            <li class="r3"><svg><use href="#i-atom"/></svg>Mult_Mol</li>
            <li class="r4"><svg><use href="#i-atom"/></svg>Mult_Range</li>
            <li class="r5"><svg><use href="#i-inf"/></svg>Mult_Var_Expo</li>
            <li class="r6"><svg><use href="#i-mon"/></svg>NMTestWaNo</li>
            <li class="r7"><svg><use href="#i-out"/></svg>Out_Analysis</li>
            <li class="r8"><svg><use href="#i-func"/></svg>Plot_func</li>
            <li class="r9 sel"><svg><use href="#i-fig"/></svg>Plot-Figures</li>
            <li class="r10"><svg><use href="#i-proj"/></svg>Projectile-motion</li>
            <li class="r11"><svg><use href="#i-esp"/></svg>Q_ESPRESSO</li>
            <li class="r12"><svg><use href="#i-cube"/></svg>QE_bulk</li>
            <li class="r13"><svg><use href="#i-info"/></svg>Range-It</li>
          </ul>
          <div class="vbar"><b class="up"></b><div class="track"><span class="thumb tn"></span></div><b class="down"></b></div>
          <div class="hbar"><b class="lt"></b><div class="track"><span class="thumb hn"></span></div><b class="rt"></b></div><div class="corner"></div>
        </div>
        <div class="cap">Workflows</div>
        <div class="box flows">
          <ul class="list plain"><li>AdvancedFor</li><li>Band_Structure</li><li>Celso_video1</li><li>Conv_Test</li><li>DFT_Surface</li><li>DFT-CASTEP</li><li>DFT-VASP</li><li>EmplyeeRecord_While</li><li>Fenics_mesh</li></ul>
          <div class="vbar"><b class="up"></b><div class="track"><span class="thumb tf"></span></div><b class="down"></b></div>
          <div class="hbar"><b class="lt"></b><div class="track"><span class="thumb hf"></span></div><b class="rt"></b></div><div class="corner"></div>
        </div>
        <div class="cap">Controls</div>
        <div class="box ctrls">
          <ul class="list"><li><svg><use href="#i-vim"/></svg>AdvancedFor</li><li><svg><use href="#i-vim"/></svg>ForEach</li><li><svg><use href="#i-if"/></svg>If</li></ul>
          <div class="vbar"><b class="up"></b><div class="track"><span class="thumb tc"></span></div><b class="down"></b></div>
        </div>
      </aside>
      <section class="mid">
        <div class="tabs"><span class="tab on">Untitled<svg><use href="#i-close"/></svg></span></div>
        <div class="pane"><div class="canvas"><div class="node n5"><svg><use href="#i-fig"/></svg>Plot-Figures</div></div><div class="vbar"><b class="up"></b><div class="track"><span class="thumb full"></span></div><b class="down"></b></div></div>
      </section>
      <section class="right">
        <div class="conn"><div class="combo">Celso</div><button class="link off"><svg><use href="#i-green"/></svg>Disconnect</button></div>
        <div class="tabs outer"><span class="tab on">WaNo Settings</span><span class="tab">Jobs &amp; Workflows</span></div>
        <div class="opane">
          <div class="itabs"><div class="clip"><span class="tab on">Plot-Figures<svg><use href="#i-close"/></svg></span><span class="tab">Resources<svg><use href="#i-close"/></svg></span><span class="tab">Imports<svg><use href="#i-close"/></svg></span><span class="tab">Exports</span></div><b class="nav lt off"></b><b class="nav rt"></b></div>
          <div class="form f6">
            <div class="row"><label>Input-File</label><span class="txt path">puts/PROJDATA.yml</span><span class="btn"><svg class="doc"><use href="#i-doc"/></svg></span><span class="btn drop"><svg><use href="#i-disk"/></svg></span></div>
            <div class="row"><label>Same-graph</label><i class="chk"></i></div>
            <div class="row"><label>Subplot</label><i class="chk yes"></i></div>
            <div class="row"><label>subplot-name</label><span class="txt">Plot-subplot.png</span><span class="btn"><svg><use href="#i-save"/></svg></span></div>
            <div class="row"><label>subplot-title</label><span class="txt">Title</span><span class="btn"><svg><use href="#i-save"/></svg></span></div>
            <fieldset class="g6"><legend>Subplots</legend>
              <div class="pm"><span><svg><use href="#i-plus"/></svg></span><span><svg><use href="#i-minus"/></svg></span></div>
              <div class="row"><label>x-axis</label><span class="txt">x0</span><span class="btn"><svg><use href="#i-save"/></svg></span></div>
              <div class="row"><label>y-axis</label><span class="txt">y0</span><span class="btn"><svg><use href="#i-save"/></svg></span></div>
              <div class="row"><label>x-label</label><span class="txt">xvar</span><span class="btn"><svg><use href="#i-save"/></svg></span></div>
              <div class="row"><label>y-label</label><span class="txt">yvar</span><span class="btn"><svg><use href="#i-save"/></svg></span></div>
            </fieldset>
          </div>
        </div>
      </section>
    </div>
    <footer class="status"><span>Welcome to the SimStack Framework</span><div class="prog">0%</div></footer>
  </div>
</section>

<svg class="arrows" viewBox="0 0 3694 4541">
  <g stroke="#3465a4" stroke-width="1.400">
    <path d="M797 558L1045 443.500M2673 634L2899 521M818.500 2305L1024 2156M2774.600 2102L2980.500 1952M838 3755L1044.600 3605M2691 3873L2928.400 3674"/>
  </g>
  <g fill="#3465a4">
    <path d="M715 595L783 531L808 585z"/><path d="M2594.500 671.500L2660 604L2688.500 659z"/>
    <path d="M744.400 2358L799.700 2280.400L835 2329.600z"/><path d="M2701.700 2154.500L2756.400 2078L2790.800 2125z"/>
    <path d="M765 3807L820 3729.700L855 3778.800z"/><path d="M2622.700 3927L2673 3846.800L2709.700 3894z"/>
  </g>
</svg>
<div class="note a1">Float mode</div>
<div class="note a2">Int mode</div>
<div class="note a3">Table's variables</div>
<div class="note a4">Import of the file</div>
<div class="note a5">Same-graph mode</div>
<div class="note a6">Subplot mode</div>
</main>
</body>
</html>
```
FILE: styles.css
```css
* { box-sizing: border-box; }
html { overflow: hidden; background: #fff; }
body { margin: 0; }
.defs { position: absolute; }

/* the six windows are laid out on one large sheet, then reduced as a whole */
.board {
  position: relative;
  zoom: .902;
  width: 3694px;
  height: 4541px;
  overflow: hidden;
  background: #fff;
  font-family: "Noto Sans", "Open Sans", sans-serif;
  font-size: 28.5px;
  line-height: 34px;
  letter-spacing: .15px;
  color: #141414;
}
ul { list-style: none; margin: 0; padding: 0; }
svg { display: block; }

/* desktop cut-outs */
.shot { position: absolute; overflow: hidden; background: linear-gradient(#582708, #7a3d18 60%, #92481e); }
.s1 { left: 2px; top: 2px; width: 1814px; height: 1476px; padding: 2px 0 0 6px; }
.s2 { left: 1864px; top: 10px; width: 1830px; height: 1476px; padding: 11px 0 0 20px; }
.s3 { left: 8px; top: 1494px; width: 1805px; height: 1552px; padding: 12px 0 0 19px; }
.s4 { left: 1877px; top: 1499px; width: 1817px; height: 1563px; padding: 17px 0 0 17px; }
.s5 { left: 19px; top: 3093px; width: 1805px; height: 1448px; padding: 0 0 0 5px; }
.s6 { left: 1865px; top: 3085px; width: 1829px; height: 1456px; padding: 0 0 0 20px; }
.wall {
  height: 40px;
  background: linear-gradient(100deg, #8f481e 0 39%, #c08a20 39.1% 39.5%, #8f481e 39.6% 49%, #b5201c 49.2% 50.2%, #bd7a17 50.3% 57.5%, #87695a 57.600% 59%, #c56b12 59.2% 64%, #9a5a40 64.2% 67%, #b97a18 67.2% 69%, #cc5a14 69.2% 73%, #a86f1c 73.2% 74.500%, #8f481e 74.700% 82%, #b47a20 82.1% 82.4%, #8f481e 82.5% 87%, #b47a20 87.1% 87.400%, #8f481e 87.500%);
}
.w1 { margin-left: -6px; }
.w2 { margin-left: -20px; }
.w3 { margin-left: -19px; }
.w4 { margin-left: -17px; }

.win { width: 1808px; background: #efefef; border-radius: 14px 14px 0 0; box-shadow: 0 0 8px rgba(0,0,0,.55); }
.win.tall { width: 1776px; }
.s2 .win { width: 1806px; }
.s4 .win { zoom: 1.0067; }
.s5 .win, .s6 .win { border-radius: 0; }

.title { display: grid; grid-template-columns: 1fr auto 1fr; align-items: center; height: 72px; background: #333031; border-bottom: 2px solid #262424; border-radius: 14px 14px 0 0; color: #fff; box-shadow: inset 0 2px #4a4747; }
.s2 .title, .s3 .title { height: 73px; }
.s5 .title { height: 65px; padding-bottom: 4px; border-radius: 0; box-shadow: none; }
.s6 .title { height: 69px; border-radius: 0; box-shadow: none; }
.title h2 { grid-column: 2; margin: 0; font-size: 27px; line-height: 34px; font-weight: 700; letter-spacing: .3px; }
.ctl { display: flex; justify-content: flex-end; align-items: center; padding-right: 17px; }
.ctl svg { width: 38px; height: 38px; }
.ctl .min { width: 16px; height: 2px; margin: 10px 52px 0 0; background: #fff; }
.ctl .max { width: 16px; height: 17px; margin-right: 41px; border: 2px solid #fff; }

.menu { display: flex; gap: 30px; height: 42px; padding: 5px 0 0 21px; border-bottom: 2px solid #d8d8d8; letter-spacing: 0; }
.menu u { text-decoration-thickness: 3px; text-underline-offset: 3px; text-decoration-skip-ink: none; }

.main { display: flex; gap: 14px; height: 1281px; padding-left: 19px; }
.tall .main { height: 1344px; }

/* left column */
.side { display: flex; flex-direction: column; width: 295px; flex: none; }
.cap { display: flex; flex-direction: column; height: 51px; justify-content: flex-end; flex: none; }
.cap.first { height: 62px; }
.cap::after, .cap:not(.first)::before, .conn + .outer::before { content: ""; align-self: center; width: 34px; height: 2px; background: repeating-linear-gradient(90deg, #bdbdbd 0 2px, transparent 2px 6px); }
.cap::after { margin: 1px 0 5px; }
.cap:not(.first)::before { margin: 2px 0 auto; }
.box { display: grid; grid-template-columns: 1fr 28px; grid-template-rows: 1fr 28px; flex: none; border: 2px solid #b4b4b4; background: #fff; overflow: hidden; }
.nodes { height: 656px; }
.flows { height: 326px; }
.ctrls { height: 137px; grid-template-rows: 1fr; }
.tall .nodes { height: 696px; }
.tall .flows { height: 348px; }
.list { overflow: hidden; min-height: 0; min-width: 0; height: 100%; contain: size; }
.list li { display: flex; align-items: center; gap: 13px; padding-left: 5px; height: 51.500px; white-space: nowrap; }
.list svg { width: 48px; height: 46px; flex: none; }
.list.plain { padding-top: 1px; }
.list.plain li { height: 33.600px; padding-left: 6px; }
.ctrls .list { padding-top: 2px; }
.ctrls li:last-child svg { margin-top: -5px; }
.list .r1 { height: 48px; } .list .r2 { height: 37px; } .list .r3 { height: 50px; } .list .r4 { height: 44px; }
.list .r5 { height: 56px; } .list .r6 { height: 46px; } .list .r7 { height: 50px; } .list .r8 { height: 42px; }
.list .r9 { height: 52px; } .list .r10 { height: 50px; } .list .r11 { height: 54px; } .list .r12 { height: 48px; gap: 7px; }
.list .r13 { height: 54px; } .list .r14 { height: 50px; } .list .r15 { height: 48px; }
.list .r3 svg, .list .r4 svg, .list .r6 svg, .list .r7 svg, .list .r8 svg { height: 42px; }
.list .sel { background: #308cc6; color: #fff; }
.list .r9.sel svg { opacity: .72; }

/* scroll bars */
.vbar, .hbar { display: flex; background: #e4e4e4; min-width: 0; min-height: 0; }
.vbar { flex-direction: column; border-left: 2px solid #b9b9b9; }
.hbar { border-top: 2px solid #b9b9b9; border-right: 0; }
.corner { background: #efefef; border-top: 2px solid #b9b9b9; border-left: 2px solid #b9b9b9; }
.track { flex: 1; display: flex; min-width: 0; min-height: 0; }
.vbar .track { flex-direction: column; }
.vbar > b, .hbar > b { display: grid; place-items: center; width: 26px; height: 26px; background: #fafafa; flex: none; }
.vbar .up { border-bottom: 2px solid #c0c0c0; } .vbar .down { border-top: 2px solid #c0c0c0; }
.hbar .lt { border-right: 2px solid #c0c0c0; } .hbar .rt { border-left: 2px solid #c0c0c0; }
b::before { content: ""; width: 14px; height: 9px; background: #5a5a5a; }
.up::before { clip-path: polygon(50% 0, 100% 100%, 0 100%); }
.down::before { clip-path: polygon(0 0, 100% 0, 50% 100%); }
.lt::before { width: 9px; height: 14px; clip-path: polygon(0 50%, 100% 0, 100% 100%); }
.rt::before { width: 9px; height: 14px; clip-path: polygon(0 0, 100% 50%, 0 100%); }
.thumb { flex: none; background: linear-gradient(90deg, #fff, #f4f4f4); }
.vbar .thumb { border: solid #b9b9b9; border-width: 0 0 2px; }
.hbar .thumb { border-right: 2px solid #b9b9b9; background: linear-gradient(#fff, #f1f1f1); }
.vbar .tn { height: 222px; margin-top: 166px; border-top-width: 2px; }
.tall .vbar .tn { height: 260px; margin-top: 196px; }
.hn { width: 101px; } .hf { width: 178px; }
.tf { height: 55px; } .tc { height: 53px; }
.tall .vbar .tf { height: 71px; margin-top: 135px; border-top-width: 2px; }
.vbar .full { height: 100%; border: 0; }
.hc { width: 514px; }

/* tabs */
.tabs { display: flex; align-items: flex-end; }
.tab { display: flex; align-items: center; gap: 11px; padding: 0 29px 0 23px; height: 56px; border: 2px solid #bcbcbc; border-left-width: 0; border-radius: 5px 5px 0 0; background: #e7e7e7; white-space: nowrap; flex: none; letter-spacing: .35px; }
.tab svg { width: 32px; height: 32px; flex: none; }
.tab.on { height: 60px; background: #fff; border-left-width: 2px; border-bottom: 0; }

.mid { display: flex; flex-direction: column; width: 649px; flex: none; padding-top: 20px; }
.tall .mid { width: 618px; }
.mid .tab { height: 57px; padding-right: 27px; padding-top: 2px; }
.mid .tab.on { height: 62px; margin-bottom: -2px; padding-left: 22px; }
.mid .tabs { height: 60px; position: relative; }
.pane { display: grid; grid-template-columns: 1fr 29px; grid-template-rows: 1fr; flex: 1; border: 2px solid #b4b4b4; padding: 3px; background: #f4f4f4; min-height: 0; }
.pane .vbar { border: 1px solid #b9b9b9; border-width: 1px 1px 1px 2px; }
.tall .pane { grid-template-rows: 1fr 28px; }
.canvas { margin: 2px 2px 4px 2px; background: #f5fff5; border: solid #777b78; border-width: 3px 0 0 3px; }
.node { display: flex; flex-direction: column; align-items: center; height: 224px; margin-top: 14px; padding-top: 12px; border: 6px solid #000; border-radius: 24px; background: #d4ff7f; font-size: 46px; line-height: 60px; letter-spacing: 0; color: #000; white-space: nowrap; }
.node svg { width: 127px; height: 127px; margin-bottom: 7px; flex: none; }
.n1 { width: 247px; margin-left: 179px; }
.n3 { width: 420px; margin-left: 83px; }
.n5 { width: 327px; margin-left: 139px; }

/* right column */
.right { display: flex; flex-direction: column; width: 798px; flex: none; }
.conn { display: flex; align-items: center; gap: 12px; height: 48px; margin: 38px 0 0 18px; }
.combo { display: flex; align-items: center; justify-content: space-between; width: 553px; height: 48px; padding: 0 14px 0 8px; border: 2px solid #b9b9b9; border-radius: 5px; background: linear-gradient(#fff, #f1f1f1); }
.combo::after { content: ""; width: 16px; height: 9px; background: #666; clip-path: polygon(0 0, 100% 0, 50% 100%); }
.link { display: flex; align-items: center; gap: 12px; width: 197px; height: 40px; padding: 0 0 0 14px; border: 2px solid #b9b9b9; border-radius: 5px; background: linear-gradient(#fff, #f4f4f4); font: inherit; letter-spacing: inherit; color: inherit; white-space: nowrap; }
.link.off { padding-left: 0; gap: 9px; }
.link svg { width: 32px; height: 34px; flex: none; }
.outer { height: 83px; position: relative; }
.conn + .outer::before { position: absolute; left: 385px; top: 21px; }
.outer .tab { height: 50px; margin-bottom: -1px; padding: 0 22px; }
.outer .tab.on { height: 56px; margin-bottom: -2px; }
.opane { display: flex; flex-direction: column; flex: 1; border: 2px solid #b4b4b4; padding: 1px 3px 3px 2px; background: #fafafa; min-height: 0; }
.itabs { display: flex; height: 63px; flex: none; }
.clip { display: flex; align-items: flex-end; flex: 1; min-width: 0; overflow: hidden; }
.clip .tab { margin-bottom: 2px; height: 57px; }
.clip .tab.on { height: 63px; margin-bottom: 0; }
.clip .torn { padding-left: 4px; clip-path: polygon(0 0, 100% 0, 100% 100%, 0 100%, 4px 70%, 1px 50%, 6px 25%); }
.s4 .tab { letter-spacing: .15px; }
.nav { display: grid; place-items: center; width: 30px; height: 63px; flex: none; border: 2px solid #bcbcbc; border-radius: 4px; background: linear-gradient(#fff, #f2f2f2); }
.nav.off::before { background: #c9c9c9; }
.form { flex: 1; margin-left: 3px; border: 2px solid #b4b4b4; padding: 8px 41px 0 37px; background: #efefef; min-height: 0; overflow: hidden; }
.row { display: flex; align-items: center; }
.row label { flex: 1; }
.f1 > .row:nth-child(1), .f2 > .row:nth-child(1) { height: 90px; }
.f1 > .row:nth-child(2) { height: 91px; } .f1 > .row:nth-child(3) { height: 108px; }
.f1 > .row:nth-child(4) { height: 90px; } .f1 > .row:nth-child(5) { height: 86px; }
.f2 > .row:nth-child(2) { height: 70px; } .f2 > .row:nth-child(3) { height: 112px; }
.f2 > .row:nth-child(4) { height: 87px; } .f2 > .row:nth-child(5) { height: 112px; }
.f3 > .row:nth-child(1), .f5 > .row:nth-child(1) { height: 105px; }
.f3 > .row:nth-child(2) { height: 72px; }
.f5 > .row:nth-child(2) { height: 70px; } .f5 > .row:nth-child(3) { height: 112px; }
.f5 > .row:nth-child(4), .f5 > .row:nth-child(6) { height: 80px; } .f5 > .row:nth-child(5) { height: 115px; }
.f5 > .row:last-child { height: 94px; }
.f6 > .row:nth-child(1), .f6 > .row:nth-child(5) { height: 106px; } .f6 > .row:nth-child(2) { height: 72px; }
.f6 > .row:nth-child(3) { height: 90px; } .f6 > .row:nth-child(4) { height: 88px; }

.chk { display: grid; place-items: center; width: 27px; height: 27px; border: 2px solid #c2c2c2; background: #fff; }
.chk.yes::before { content: ""; width: 8px; height: 15px; margin: -4px 0 0 2px; border: solid #111; border-width: 0 3.500px 3.500px 0; transform: rotate(35deg); }
.spin, .txt { display: flex; align-items: center; height: 48px; border: 2px solid #b9b9b9; border-radius: 5px; background: #fff; color: #111; white-space: nowrap; }
.spin { width: 224px; padding-left: 9px; justify-content: space-between; }
.spin.wide { width: 333px; }
.spin::after { content: ""; width: 27px; height: 100%; border-left: 2px solid #b9b9b9; background:
  linear-gradient(#fafafa, #fafafa) 0 0 / 0 0 no-repeat,
  conic-gradient(from 135deg at 50% 9px, #666 90deg, transparent 0) center 0 / 16px 17px no-repeat,
  conic-gradient(from -45deg at 50% 8px, #666 90deg, transparent 0) center 100% / 16px 17px no-repeat, #fafafa; }
.txt { width: 280px; padding-left: 4px; overflow: hidden; }
.txt.path { padding: 0 4px 0 0; justify-content: flex-end; letter-spacing: 1.100px; }
.btn { display: grid; place-items: center; width: 55px; height: 46px; margin-left: 13px; border: 2px solid #b9b9b9; border-radius: 5px; background: linear-gradient(#fff, #f2f2f2); flex: none; }
.btn svg { width: 28px; height: 33px; margin-left: 2px; }
.btn .doc { margin-left: 0; height: 32px; }
.btn.drop { display: flex; align-items: center; justify-content: center; gap: 3px; width: 78px; padding-left: 10px; }
.btn.drop svg { width: 32px; height: 34px; margin: 0; }
.btn.drop::after { content: ""; width: 11px; height: 6px; background: #666; clip-path: polygon(0 0, 100% 0, 50% 100%); }

fieldset { position: relative; margin: 0 -18px; padding: 0 18px; border: 2px solid #929292; border-radius: 20px; min-width: 0; }
legend { height: 28px; line-height: 28px; padding: 0 10px; margin-left: 0; }
fieldset .row { height: 97px; padding: 0 18px 0 17px; }
.g3 { height: 367px; margin-top: 15px; }
.g3 .row:nth-of-type(2) { height: 103px; padding-bottom: 6px; }
.g3 .row + .row { height: 115px; padding-top: 5px; border-top: 2px solid #aeaeae; }
.g5 { height: 331px; margin-top: 17px; }
.g6 { height: 428px; margin-top: 5px; }
.pm { position: absolute; right: 18px; top: -31px; display: flex; gap: 13px; }
.pm span { display: grid; place-items: center; width: 46px; height: 46px; border: 2px solid #b9b9b9; border-radius: 5px; background: linear-gradient(#fff, #f2f2f2); }
.pm svg { width: 34px; height: 34px; }

.sheet { display: grid; grid-template-columns: 26px 198px 198px 198px 1fr; grid-template-rows: 42px 59px 1fr; padding: 0; background: #fff; font-weight: 700; color: #000; }
.hd { display: flex; align-items: center; justify-content: center; background: linear-gradient(#fff, #ececec); border: solid #c2c2c2; border-width: 0 2px 2px 0; overflow: hidden; white-space: nowrap; }
.hd:first-child { border-right: 0; }
.hd.cut { padding: 0 3px 0 5px; border-right: 0; }
.hd.cut span { display: flex; justify-content: center; width: 100%; overflow: hidden; }
.rest { background: #efefef; }
.no { display: flex; align-items: center; padding-left: 4px; border: solid #c2c2c2; border-width: 0 2px 2px 0; background: #fafafa; }
.cell { display: flex; justify-content: flex-end; padding: 1px; border: solid #b0b0b0; border-width: 0 2px 2px 0; background: #308cc6; }
.cell .btn { width: 54px; height: 54px; margin: 0; }
.cell .btn svg { width: 32px; height: 34px; margin: 0; }
.gut { background: #efefef; }

.status { position: relative; display: flex; justify-content: space-between; align-items: center; height: 64px; padding: 26px 48px 0 12px; }
.status::after { content: ""; position: absolute; right: 3px; bottom: 6px; width: 18px; height: 18px; background: radial-gradient(circle, #b5b5b5 1.2px, transparent 1.6px) 0 0 / 6px 6px; clip-path: polygon(100% 0, 100% 100%, 0 100%); }
.tall .status { height: 65px; padding-top: 21px; }
.prog { width: 297px; height: 33px; line-height: 29px; border: 2px solid #b9b9b9; border-radius: 4px; background: #fff; text-align: center; }

/* call-outs over the windows */
.arrows { position: absolute; left: 0; top: 0; width: 3694px; height: 4541px; }
.note { position: absolute; display: flex; align-items: center; justify-content: center; height: 87px; border: 10px solid #3465a4; border-radius: 4px; background: #f5fff5; font: 56.800px/60px "Liberation Sans", Arial, sans-serif; letter-spacing: 0; color: #000; white-space: nowrap; }
.a1 { left: 506px; top: 632px; width: 341px; }
.a2 { left: 2360px; top: 707px; width: 341px; }
.a3 { left: 384px; top: 2373px; width: 519px; }
.a4 { left: 2264px; top: 2173px; width: 519px; }
.a5 { left: 404px; top: 3832px; width: 519px; }
.a6 { left: 2320px; top: 3956px; width: 443px; }
```
